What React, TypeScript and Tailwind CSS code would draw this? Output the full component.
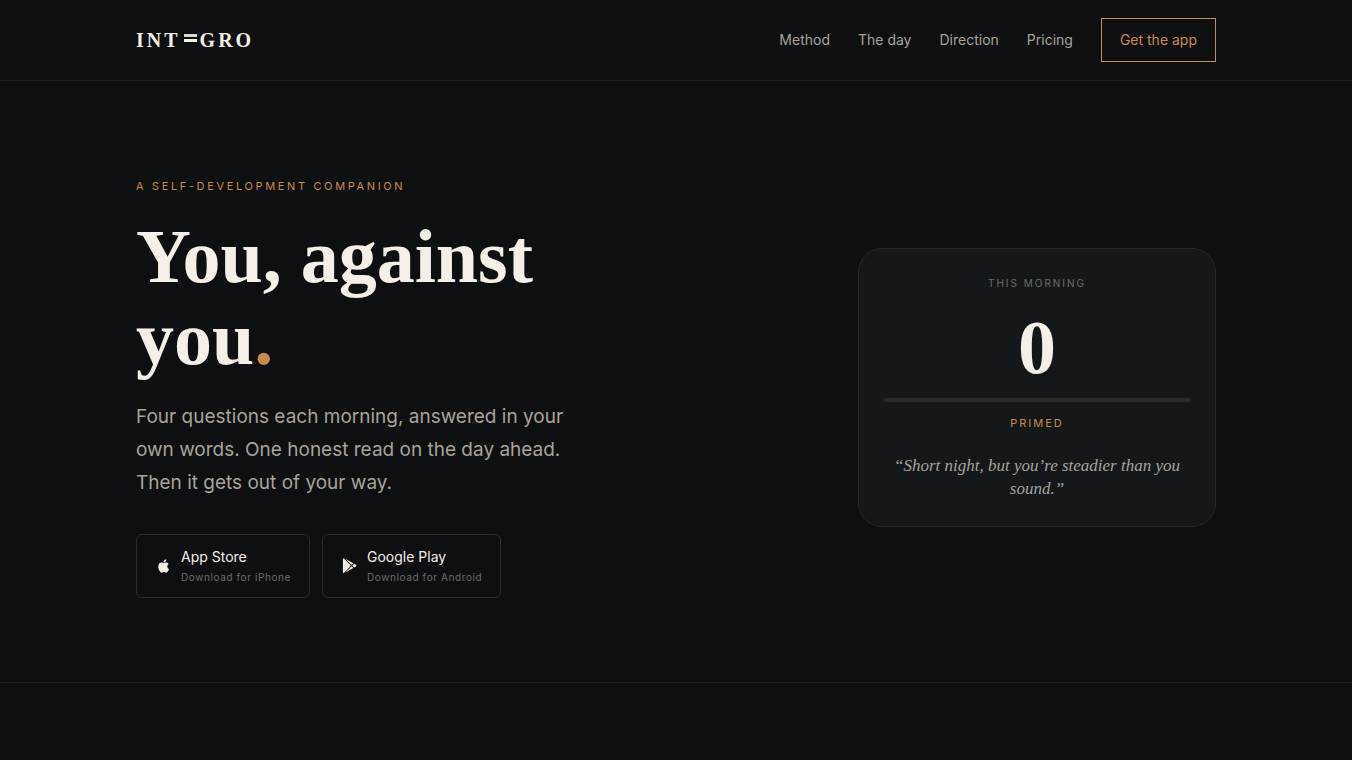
import React from 'react';

const navLinks = [
  { label: 'Method', href: '#method' },
  { label: 'The day', href: '#day' },
  { label: 'Direction', href: '#direction' },
  { label: 'Pricing', href: '#pricing' },
];

const stores = [
  {
    name: 'App Store',
    note: 'Download for iPhone',
    href: '#ios',
    viewBox: '-1 0 24 24',
    icon: 'M18.71,19.5C17.88,20.74 17,21.95 15.66,21.97C14.32,22 13.89,21.18 12.37,21.18C10.84,21.18 10.37,21.95 9.1,22C7.79,22.05 6.8,20.68 5.96,19.47C4.25,17 2.94,12.45 4.7,9.39C5.57,7.87 7.13,6.91 8.82,6.88C10.1,6.86 11.32,7.75 12.11,7.75C12.89,7.75 14.37,6.68 15.92,6.84C16.57,6.87 18.39,7.1 19.56,8.82C19.47,8.88 17.39,10.1 17.41,12.63C17.44,15.65 20.06,16.66 20.09,16.67C20.06,16.74 19.67,18.11 18.71,19.5M13,3.5C13.73,2.67 14.94,2.04 15.94,2C16.07,3.17 15.6,4.35 14.9,5.19C14.21,6.04 13.07,6.7 11.95,6.61C11.8,5.46 12.36,4.26 13,3.5Z',
  },
  {
    name: 'Google Play',
    note: 'Download for Android',
    href: '#android',
    viewBox: '-40 -10 550 550',
    icon: 'M325.3 234.3L104.6 13l280.8 161.2-60.1 60.1zM47 0C34 6.8 25.3 19.2 25.3 35.3v441.3c0 16.1 8.7 28.5 21.7 35.3l256.6-256L47 0zm425.2 225.6l-58.9-34.1-65.7 64.5 65.7 64.5 60.1-34.1c18-14.3 18-46.5-1.2-60.8zM104.6 499l280.8-161.2-60.1-60.1L104.6 499z',
  },
];

function Logo() {
  return (
    <a
      href="#top"
      aria-label="Integro"
      className="flex items-center font-['Liberation_Serif',serif] text-xl font-bold tracking-[3px] text-[#f4f0e8]"
    >
      <span>INT</span>
      <svg viewBox="0 0 13 12" className="mx-[3px] h-3 w-[13px]" aria-hidden="true">
        <rect y="0" width="13" height="3" fill="#ddd6cb" />
        <rect y="5" width="13" height="3" fill="#f4f0e8" />
      </svg>
      <span>GRO</span>
    </a>
  );
}

function Header() {
  return (
    <header className="border-b border-[#202325]">
      <div className="mx-auto flex max-w-[1128px] items-center justify-between px-6 py-[18px]">
        <Logo />
        <nav className="flex items-center gap-7 text-sm text-[#a8a499]">
          {navLinks.map((link) => (
            <a key={link.href} href={link.href}>
              {link.label}
            </a>
          ))}
          <a href="#get" className="border border-[#c98a4b] px-[18px] py-[11px] text-[#c98a4b]">
            Get the app
          </a>
        </nav>
      </div>
    </header>
  );
}

function MorningCard() {
  return (
    <aside className="w-[358px] rounded-3xl border border-[#24292c] bg-[#14181b] px-6 py-[26px] text-center">
      <p className="text-[10px] leading-4 tracking-[2px] text-[#6b6d6e]">THIS MORNING</p>
      <p className="mt-5 font-['Liberation_Serif',serif] text-[76px] leading-[72px] font-bold text-[#f4f0e8]">0</p>
      <div className="mt-[15px] h-1 rounded-full bg-[#272b2e]" />
      <p className="mt-3 text-[11px] leading-[18px] tracking-[2px] text-[#c98a4b]">PRIMED</p>
      <p className="mt-[22px] font-['Liberation_Serif',serif] text-[17px] leading-[23px] text-[#a8a499] italic">
        “Short night, but you’re steadier than you sound.”
      </p>
    </aside>
  );
}

function Hero() {
  return (
    <section className="border-b border-[#202325]">
      <div className="mx-auto flex max-w-[1128px] items-center justify-between gap-12 px-6 pt-24 pb-[84px]">
        <div className="max-w-[460px]">
          <p className="text-[11px] leading-[18px] tracking-[0.24em] text-[#c98a4b]">A SELF-DEVELOPMENT COMPANION</p>
          <h1 className="mt-5 font-['Liberation_Serif',serif] text-[76px] leading-[82px] font-bold text-[#f4f0e8]">
            You, against you<span className="text-[#c98a4b]">.</span>
          </h1>
          <p className="mt-[21px] text-[19px] leading-[33px] text-[#a8a499]">
            Four questions each morning, answered in your own words. One honest read on the day ahead. Then it gets
            out of your way.
          </p>
          <div className="mt-[35px] flex gap-3">
            {stores.map((store) => (
              <a
                key={store.name}
                href={store.href}
                className="flex items-center gap-2.5 rounded-md border border-[#2a2d2f] px-[18px] py-3 whitespace-nowrap"
              >
                <svg viewBox={store.viewBox} className="size-4 fill-[#f4f0e8]" aria-hidden="true">
                  <path d={store.icon} />
                </svg>
                <span className="flex flex-col gap-0.5">
                  <span className="text-sm leading-5 text-[#f4f0e8]">{store.name}</span>
                  <span className="text-[10px] leading-4 tracking-[0.06em] text-[#6b6d6e]">{store.note}</span>
                </span>
              </a>
            ))}
          </div>
        </div>
        <MorningCard />
      </div>
    </section>
  );
}

function App() {
  return (
    <div id="top" className="min-h-screen bg-[#0d0f11] font-['Inter',sans-serif]">
      <Header />
      <main>
        <Hero />
      </main>
    </div>
  );
}

export default App;
